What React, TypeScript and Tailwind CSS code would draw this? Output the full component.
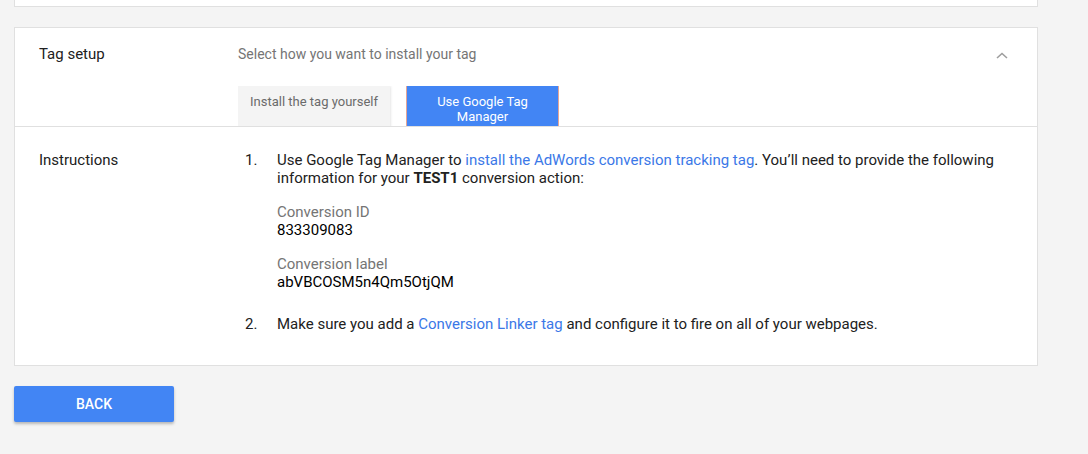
export default function App() {
  return (
    <div className="min-h-screen bg-[#f4f4f4] pl-[14px] text-[15px] text-[#212121] font-['Roboto',sans-serif]">
      {/* previous card tail */}
      <div className="w-[1024px] h-[7px] bg-white border-x border-b border-[#e0e0e0]" />

      <div className="mt-[20px] w-[1024px] bg-white border border-[#e0e0e0]">
        {/* Tag setup */}
        <div className="flex pt-[16px] pl-[24px] pr-[28px] border-b border-[#e0e0e0]">
          <div className="w-[199px] leading-[20px]">Tag setup</div>
          <div className="flex-1">
            <div className="flex items-center justify-between">
              <div className="leading-[20px] text-[14px] text-[#757575]">Select how you want to install your tag</div>
              <svg width="14" height="10" viewBox="0 0 14 10" className="mt-[4px]">
                <path d="M2 7 L7 2.5 L12 7" fill="none" stroke="#9e9e9e" strokeWidth="1.6" />
              </svg>
            </div>
            <div className="flex gap-[16px] mt-[22px] h-[40px] overflow-hidden">
              <div className="w-[152px] h-[48px] bg-[#f4f4f4] shadow-[0_0_3px_rgba(0,0,0,0.18)] pt-[8px] text-center text-[13px] leading-[15px] text-[#6b6b6b]">
                Install the tag yourself
              </div>
              <div className="w-[153px] h-[48px] -mt-[1px] bg-[#4285f4] border border-[#e4a596] pt-[8px] text-center text-[13px] leading-[15px] text-white">
                Use Google Tag
                <br />
                Manager
              </div>
            </div>
          </div>
        </div>

        {/* Instructions */}
        <div className="flex pt-[24px] pb-[32px] pl-[24px] pr-[24px] leading-[18px]">
          <div className="w-[199px]">Instructions</div>
          <ol className="flex-1">
            <li className="flex">
              <span className="w-[39px] pl-[7px]">1.</span>
              <div className="flex-1">
                <p>
                  Use Google Tag Manager to{' '}
                  <a className="text-[#3b78e7]">install the AdWords conversion tracking tag</a>. You’ll need to provide
                  the following information for your <b className="font-bold">TEST1</b> conversion action:
                </p>
                <div className="mt-[16px]">
                  <div className="text-[#757575]">Conversion ID</div>
                  <div className="text-black">833309083</div>
                </div>
                <div className="mt-[16px]">
                  <div className="text-[#757575]">Conversion label</div>
                  <div className="text-black">abVBCOSM5n4Qm5OtjQM</div>
                </div>
              </div>
            </li>
            <li className="flex mt-[24px]">
              <span className="w-[39px] pl-[7px]">2.</span>
              <p className="flex-1">
                Make sure you add a <a className="text-[#3b78e7]">Conversion Linker tag</a> and configure it to fire on
                all of your webpages.
              </p>
            </li>
          </ol>
        </div>
      </div>

      <button className="mt-[20px] w-[160px] h-[36px] rounded-[2px] bg-[#4285f4] text-white text-[14px] font-medium shadow-[0_2px_3px_rgba(0,0,0,0.25)]">
        BACK
      </button>
    </div>
  );
}
